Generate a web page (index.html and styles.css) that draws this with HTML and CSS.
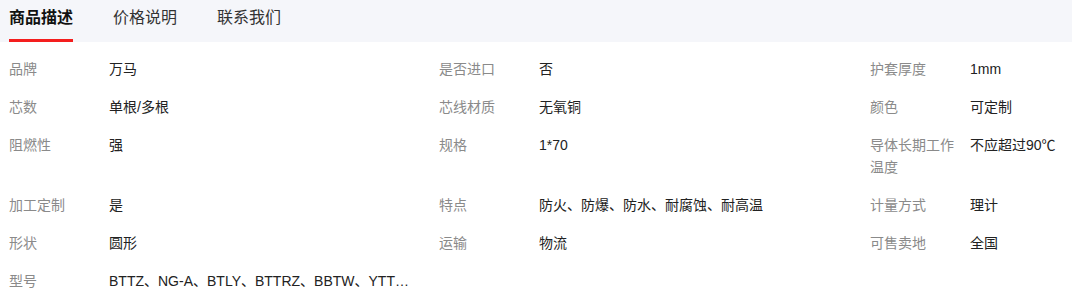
FILE: index.html
```html
<!DOCTYPE html>
<html lang="zh-CN">
<head>
<meta charset="utf-8">
<title>商品描述</title>
<link rel="stylesheet" href="styles.css">
</head>
<body>
<div class="tabs">
  <div class="tab active">商品描述</div>
  <div class="tab">价格说明</div>
  <div class="tab">联系我们</div>
</div>
<div class="attrs">
  <div class="cell"><span class="label">品牌</span><span class="value">万马</span></div>
  <div class="cell"><span class="label">是否进口</span><span class="value">否</span></div>
  <div class="cell"><span class="label">护套厚度</span><span class="value">1mm</span></div>

  <div class="cell"><span class="label">芯数</span><span class="value">单根/多根</span></div>
  <div class="cell"><span class="label">芯线材质</span><span class="value">无氧铜</span></div>
  <div class="cell"><span class="label">颜色</span><span class="value">可定制</span></div>

  <div class="cell"><span class="label">阻燃性</span><span class="value">强</span></div>
  <div class="cell"><span class="label">规格</span><span class="value">1*70</span></div>
  <div class="cell"><span class="label">导体长期工作温度</span><span class="value">不应超过90℃</span></div>

  <div class="cell"><span class="label">加工定制</span><span class="value">是</span></div>
  <div class="cell"><span class="label">特点</span><span class="value">防火、防爆、防水、耐腐蚀、耐高温</span></div>
  <div class="cell"><span class="label">计量方式</span><span class="value">理计</span></div>

  <div class="cell"><span class="label">形状</span><span class="value">圆形</span></div>
  <div class="cell"><span class="label">运输</span><span class="value">物流</span></div>
  <div class="cell"><span class="label">可售卖地</span><span class="value">全国</span></div>

  <div class="cell"><span class="label">型号</span><span class="value nowrap">BTTZ、NG-A、BTLY、BTTRZ、BBTW、YTT…</span></div>
</div>
</body>
</html>
```

FILE: styles.css
```css
html, body {
  margin: 0;
  padding: 0;
  background: #ffffff;
}

body {
  font-family: "Liberation Sans", "Noto Sans CJK SC", sans-serif;
  font-size: 14px;
  color: #333333;
}

.tabs {
  display: flex;
  gap: 40px;
  height: 42px;
  padding-left: 9px;
  background: #f5f6fa;
  box-sizing: border-box;
}

.tab {
  font-size: 16px;
  line-height: 22px;
  padding-top: 7px;
  padding-bottom: 10px;
  border-bottom: 3px solid transparent;
  color: #333333;
}

.tab.active {
  font-weight: bold;
  color: #111111;
  border-bottom-color: #f41e1e;
}

.attrs {
  display: grid;
  grid-template-columns: 430px 431px 1fr;
  row-gap: 16px;
  padding: 16px 0 0 9px;
}

.cell {
  display: flex;
  align-items: flex-start;
  line-height: 22px;
  min-width: 0;
}

.label {
  flex: 0 0 90px;
  padding-right: 10px;
  color: #8a8a8a;
}

.value {
  flex: 1 1 auto;
  min-width: 0;
  color: #222222;
}

.value.nowrap {
  white-space: nowrap;
}
```
